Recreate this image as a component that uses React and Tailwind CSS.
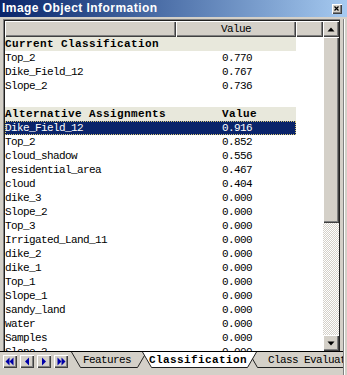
import React from "react";

const current = [
  ["Top_2", "0.770"],
  ["Dike_Field_12", "0.767"],
  ["Slope_2", "0.736"],
];

const alt = [
  ["Dike_Field_12", "0.916"],
  ["Top_2", "0.852"],
  ["cloud_shadow", "0.556"],
  ["residential_area", "0.467"],
  ["cloud", "0.404"],
  ["dike_3", "0.000"],
  ["Slope_2", "0.000"],
  ["Top_3", "0.000"],
  ["Irrigated_Land_11", "0.000"],
  ["dike_2", "0.000"],
  ["dike_1", "0.000"],
  ["Top_1", "0.000"],
  ["Slope_1", "0.000"],
  ["sandy_land", "0.000"],
  ["water", "0.000"],
  ["Samples", "0.000"],
  ["Slope_3", "0.000"],
];

const raised =
  "bg-[#d4d0c8] shadow-[inset_1px_1px_#ffffff,inset_-1px_-1px_#404040,inset_-2px_-2px_#808080]";

function Row({ name, value }) {
  return (
    <div className="flex h-[14px] w-[291px] shrink-0 items-center text-[11px] leading-[14px] tracking-[-0.6px] text-black">
      <span className="w-[217px] whitespace-nowrap">{name}</span>
      <span className="whitespace-nowrap">{value}</span>
    </div>
  );
}

function SectionRow({ name, value }) {
  return (
    <div className="flex h-[14px] w-[291px] shrink-0 items-center bg-[#e8e8dc] text-[11px] font-bold leading-[14px] tracking-[0.4px] text-black">
      <span className="w-[217px] whitespace-nowrap">{name}</span>
      <span className="whitespace-nowrap">{value}</span>
    </div>
  );
}

function SelectedRow({ name, value }) {
  return (
    <div className="flex h-[14px] w-[291px] shrink-0 items-center bg-[#0a246a] text-[11px] leading-[14px] tracking-[-0.6px] text-white outline-1 outline-dotted -outline-offset-1 outline-[#d8c878]">
      <span className="w-[217px] whitespace-nowrap">{name}</span>
      <span className="whitespace-nowrap">{value}</span>
    </div>
  );
}

function NavButton({ kind }) {
  const c = "#0000a8";
  return (
    <div className={`h-[13px] w-[14px] ${raised} flex items-center justify-center`}>
      <svg width="14" height="13" viewBox="0 0 14 13">
        {kind === "first" && (
          <>
            <polygon points="2.5,6.5 6.5,2.5 6.5,10.5" fill={c} />
            <polygon points="6.5,6.5 10.5,2.5 10.5,10.5" fill={c} />
          </>
        )}
        {kind === "prev" && <polygon points="5,6.5 9,2.5 9,10.5" fill={c} />}
        {kind === "next" && <polygon points="9,6.5 5,2.5 5,10.5" fill={c} />}
        {kind === "last" && (
          <>
            <polygon points="7.5,6.5 3.5,2.5 3.5,10.5" fill={c} />
            <polygon points="11.5,6.5 7.5,2.5 7.5,10.5" fill={c} />
          </>
        )}
      </svg>
    </div>
  );
}

function Tab({ width, label, active, pl, className = "" }) {
  const w = width;
  return (
    <div
      className={`relative h-[16px] shrink-0 ${className}`}
      style={{ width: w }}
    >
      <svg
        className="absolute left-0 top-0"
        width={w}
        height="16"
        viewBox={`0 0 ${w} 16`}
      >
        <path
          d={`M0.5,0 L9.5,15.5 L${w - 9.5},15.5 L${w - 0.5},0`}
          fill={active ? "#ffffff" : "#d4d0c8"}
          stroke="#202020"
          strokeWidth="1"
        />
      </svg>
      <div
        className={`relative flex h-[16px] items-center whitespace-nowrap text-[11px] leading-[16px] text-black ${
          active ? "font-bold tracking-[0.4px]" : "tracking-[-0.6px]"
        }`}
        style={{ paddingLeft: pl }}
      >
        {label}
      </div>
    </div>
  );
}

export default function App() {
  return (
    <div className="flex h-[375px] w-[347px] flex-col overflow-hidden bg-[#d4d0c8] font-['Liberation_Mono',monospace]">
      {/* Title bar */}
      <div className="flex h-[17px] shrink-0 items-center justify-between bg-linear-to-r from-[#0a246a] to-[#a6caf0] pl-[2px] pr-[5px]">
        <span className="font-['Liberation_Sans',Arial,sans-serif] text-[12px] font-bold leading-[17px] tracking-[0.45px] text-white">
          Image Object Information
        </span>
        <div className={`flex h-[10px] w-[10px] items-center justify-center ${raised}`}>
          <svg width="10" height="10" viewBox="0 0 10 10">
            <path d="M2.5,2.5 L6.5,6.5 M6.5,2.5 L2.5,6.5" stroke="#000" strokeWidth="1.2" />
          </svg>
        </div>
      </div>

      <div className="flex flex-1 pt-[2px]">
        <div className="flex w-[343px] flex-col">
          {/* List box */}
          <div className="ml-[3px] flex w-[337px] flex-1 flex-col border-l border-t border-[#808080]">
            <div className="flex flex-1 border-l border-r border-t border-[#202020] bg-white">
              {/* Table */}
              <div className="flex h-[330px] w-[318px] flex-col overflow-hidden">
                <div className="flex h-[16px] shrink-0 text-[11px] leading-[16px] tracking-[-0.6px] text-black">
                  <div className={`w-[171px] ${raised}`}></div>
                  <div className={`flex w-[120px] items-center justify-center ${raised}`}>
                    Value
                  </div>
                  <div className={`flex-1 ${raised}`}></div>
                </div>
                <SectionRow name="Current Classification" value="" />
                {current.map(([n, v], i) => (
                  <Row key={"c" + i} name={n} value={v} />
                ))}
                <div className="h-[14px] shrink-0" />
                <SectionRow name="Alternative Assignments" value="Value" />
                {alt.map(([n, v], i) =>
                  i === 0 ? (
                    <SelectedRow key={"a" + i} name={n} value={v} />
                  ) : (
                    <Row key={"a" + i} name={n} value={v} />
                  )
                )}
              </div>
              {/* Scrollbar */}
              <div className="flex w-[16px] flex-col">
                <div className={`flex h-[16px] shrink-0 items-center justify-center ${raised}`}>
                  <svg width="8" height="5" viewBox="0 0 8 5">
                    <polygon points="4,0.5 7.5,4.5 0.5,4.5" fill="#000" />
                  </svg>
                </div>
                <div className={`h-[186px] shrink-0 ${raised}`}></div>
                <div className="flex-1 bg-[image:repeating-conic-gradient(#d4d0c8_0_25%,#ffffff_0_50%)] bg-[length:2px_2px]"></div>
                <div className={`flex h-[16px] shrink-0 items-center justify-center ${raised}`}>
                  <svg width="8" height="5" viewBox="0 0 8 5">
                    <polygon points="0.5,0.5 7.5,0.5 4,4.5" fill="#000" />
                  </svg>
                </div>
              </div>
            </div>
          </div>

          {/* Tab strip */}
          <div className="flex h-[17px] shrink-0 overflow-hidden border-t border-black">
            <div className="flex gap-[3px] pl-[3px] pt-[3px]">
              <NavButton kind="first" />
              <NavButton kind="prev" />
              <NavButton kind="next" />
              <NavButton kind="last" />
            </div>
            <div className="ml-[3px] flex">
              <Tab width={76} label="Features" pl={12} />
              <Tab width={115} label="Classification" active pl={7} className="z-10 -ml-[5px]" />
              <Tab width={130} label="Class Evaluation" pl={20} className="-ml-[9px]" />
            </div>
          </div>
          <div className="h-[7px] shrink-0" />
        </div>
        <div className="w-[4px] border-l border-[#808080] shadow-[inset_1px_0_#ffffff]" />
      </div>
    </div>
  );
}
